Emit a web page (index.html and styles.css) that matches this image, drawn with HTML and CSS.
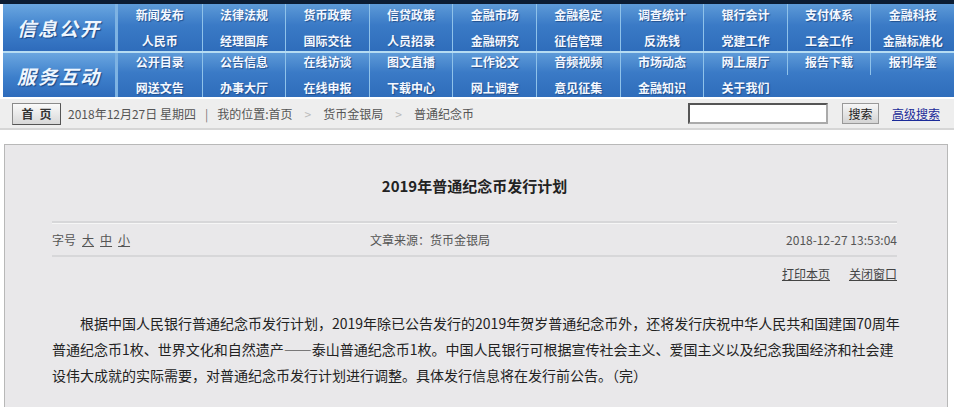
FILE: index.html
```html
<!DOCTYPE html>
<html lang="zh-CN">
<head>
  <meta charset="UTF-8" />
  <title>2019年普通纪念币发行计划</title>
  <link rel="stylesheet" href="styles.css">
</head>
<body>
  <div class="top-strip"></div>

  <div class="nav">
    <div class="nav-group first">
      <div class="nav-label">信息公开</div>
      <div class="nav-grid">
        <a>新闻发布</a><a>法律法规</a><a>货币政策</a><a>信贷政策</a><a>金融市场</a>
        <a>金融稳定</a><a>调查统计</a><a>银行会计</a><a>支付体系</a><a>金融科技</a>
        <a>人民币</a><a>经理国库</a><a>国际交往</a><a>人员招录</a><a>金融研究</a>
        <a>征信管理</a><a>反洗钱</a><a>党建工作</a><a>工会工作</a><a>金融标准化</a>
      </div>
    </div>
    <div class="nav-line"></div>
    <div class="nav-group second">
      <div class="nav-label">服务互动</div>
      <div class="nav-grid">
        <a>公开目录</a><a>公告信息</a><a>在线访谈</a><a>图文直播</a><a>工作论文</a>
        <a>音频视频</a><a>市场动态</a><a>网上展厅</a><a>报告下载</a><a>报刊年鉴</a>
        <a>网送文告</a><a>办事大厅</a><a>在线申报</a><a>下载中心</a><a>网上调查</a>
        <a>意见征集</a><a>金融知识</a><a>关于我们</a><span></span><span></span>
      </div>
    </div>
  </div>

  <div class="crumb">
    <button class="home-btn">首页</button>
    <span class="crumb-text">2018年12月27日 星期四</span>
    <span class="crumb-bar">|</span>
    <span class="crumb-text">我的位置:首页</span>
    <span class="crumb-arrow">&gt;</span>
    <span class="crumb-text">货币金银局</span>
    <span class="crumb-arrow">&gt;</span>
    <span class="crumb-text">普通纪念币</span>
    <div class="search">
      <input type="text" class="search-input" />
      <button class="search-btn">搜索</button>
      <a class="adv-link">高级搜索</a>
    </div>
  </div>

  <div class="article">
    <h1 class="title">2019年普通纪念币发行计划</h1>
    <div class="meta">
      <div class="font-size">字号<a>大</a><a>中</a><a>小</a></div>
      <div class="source">文章来源：货币金银局</div>
      <div class="date">2018-12-27 13:53:04</div>
    </div>
    <div class="tools">
      <a>打印本页</a>
      <a>关闭窗口</a>
    </div>
    <p class="body-text">根据中国人民银行普通纪念币发行计划，2019年除已公告发行的2019年贺岁普通纪念币外，还将发行庆祝中华人民共和国建国70周年普通纪念币1枚、世界文化和自然遗产——泰山普通纪念币1枚。中国人民银行可根据宣传社会主义、爱国主义以及纪念我国经济和社会建设伟大成就的实际需要，对普通纪念币发行计划进行调整。具体发行信息将在发行前公告。（完）</p>
  </div>
</body>
</html>
```

FILE: styles.css
```css
body {
  margin: 0;
  background: #fff;
  font-family: "Noto Sans CJK SC", "Liberation Sans", sans-serif;
  color: #333;
  overflow: hidden;
}
.top-strip {
  height: 4px;
  background: #0b1c33;
}
.nav {
  padding-left: 3px;
  background: #fff;
}
.nav-group {
  display: flex;
  background: linear-gradient(#5d9ad8, #3a7ac6 45%, #2f6dbb);
}
.nav-group.first {
  height: 47px;
}
.nav-group.second {
  height: 44px;
}
.nav-line {
  height: 2px;
  background: #b6dcf2;
}
.nav-label {
  width: 112px;
  flex-shrink: 0;
  display: flex;
  align-items: center;
  justify-content: center;
  border-right: 3px solid #7eb3e3;
  background: linear-gradient(#6aa6e0, #3d7fcb 55%, #2e6bbb);
  color: #eef6ff;
  font-size: 19px;
  font-style: italic;
  font-weight: bold;
  letter-spacing: 2px;
  text-shadow: 1px 1px 1px #1b4785;
}
.nav-grid {
  flex: 1;
  display: grid;
  grid-template-columns: repeat(10, 1fr);
  grid-template-rows: 1fr 1fr;
}
.nav-grid a,
.nav-grid span {
  display: flex;
  justify-content: center;
  border-left: 1px solid #8fc2ea;
  color: #f4f8ff;
  font-size: 12px;
  font-weight: bold;
  text-shadow: 1px 1px 1px #214f8e;
}
.nav-grid a:nth-child(-n+10) {
  align-items: flex-start;
  padding-top: 2px;
}
.nav-grid a:nth-child(n+11) {
  align-items: flex-end;
  padding-bottom: 2px;
}
.second .nav-grid a:nth-child(-n+10) {
  padding-top: 0;
}
.second .nav-grid a:nth-child(n+11) {
  padding-bottom: 1px;
}
.nav-grid a:nth-child(10n+1) {
  border-left: none;
}
.nav-grid span {
  border-left: none;
}
.crumb {
  height: 29px;
  margin-top: 2px;
  display: flex;
  align-items: center;
  gap: 5px;
  padding-left: 12px;
  background: #eeeeee;
  border-bottom: 2px solid #d6d6d6;
  font-size: 12px;
  color: #555;
}
.home-btn {
  width: 49px;
  height: 22px;
  padding: 0 0 0 6px;
  margin-right: 2px;
  border: 1px solid #8a8a8a;
  border-right-color: #555;
  border-bottom-color: #555;
  background: linear-gradient(#fafafa, #d8d8d8);
  font-family: inherit;
  font-size: 12px;
  font-weight: bold;
  letter-spacing: 6px;
  color: #333;
}
.crumb-bar {
  color: #777;
  padding: 0 4px;
}
.crumb-arrow {
  color: #bbb;
  padding: 0 7px;
}
.search {
  margin-left: auto;
  display: flex;
  align-items: center;
  padding-right: 14px;
}
.search-input {
  width: 132px;
  height: 15px;
  margin-right: 14px;
  border: 2px solid #555;
  border-right-color: #aaa;
  border-bottom-color: #aaa;
  background: #fff;
}
.search-btn {
  width: 37px;
  height: 21px;
  padding: 0;
  margin-right: 13px;
  border: 1px solid #999;
  background: linear-gradient(#f6f6f6, #d4d4d4);
  font-family: inherit;
  font-size: 12px;
  color: #222;
}
.adv-link {
  color: #1b2b99;
  text-decoration: underline;
  font-size: 12px;
}
.article {
  margin: 14px 6px 0 4px;
  height: 262px;
  border: 1px solid #b8b8b8;
  border-bottom: none;
  background: #e9e8ea;
  padding: 0 50px 0 47px;
}
.title {
  margin: 30px 0 0;
  height: 46px;
  text-align: center;
  font-size: 15px;
  font-weight: bold;
  color: #222;
  border-bottom: 2px solid #d7d7d9;
}
.meta {
  display: flex;
  align-items: center;
  height: 31px;
  border-top: 1px solid #f6f6f6;
  border-bottom: 2px solid #d7d7d9;
  font-size: 12px;
  color: #555;
}
.font-size {
  width: 318px;
}
.font-size a {
  margin-left: 6px;
  text-decoration: underline;
}
.source {
  flex: 1;
}
.date {
  text-align: right;
}
.tools {
  display: flex;
  justify-content: flex-end;
  gap: 19px;
  margin-top: 8px;
  font-size: 12px;
  color: #444;
}
.tools a {
  text-decoration: underline;
}
.body-text {
  margin: 28px 0 0;
  width: 850px;
  font-size: 14px;
  line-height: 26px;
  text-indent: 2em;
  color: #222;
}
```
